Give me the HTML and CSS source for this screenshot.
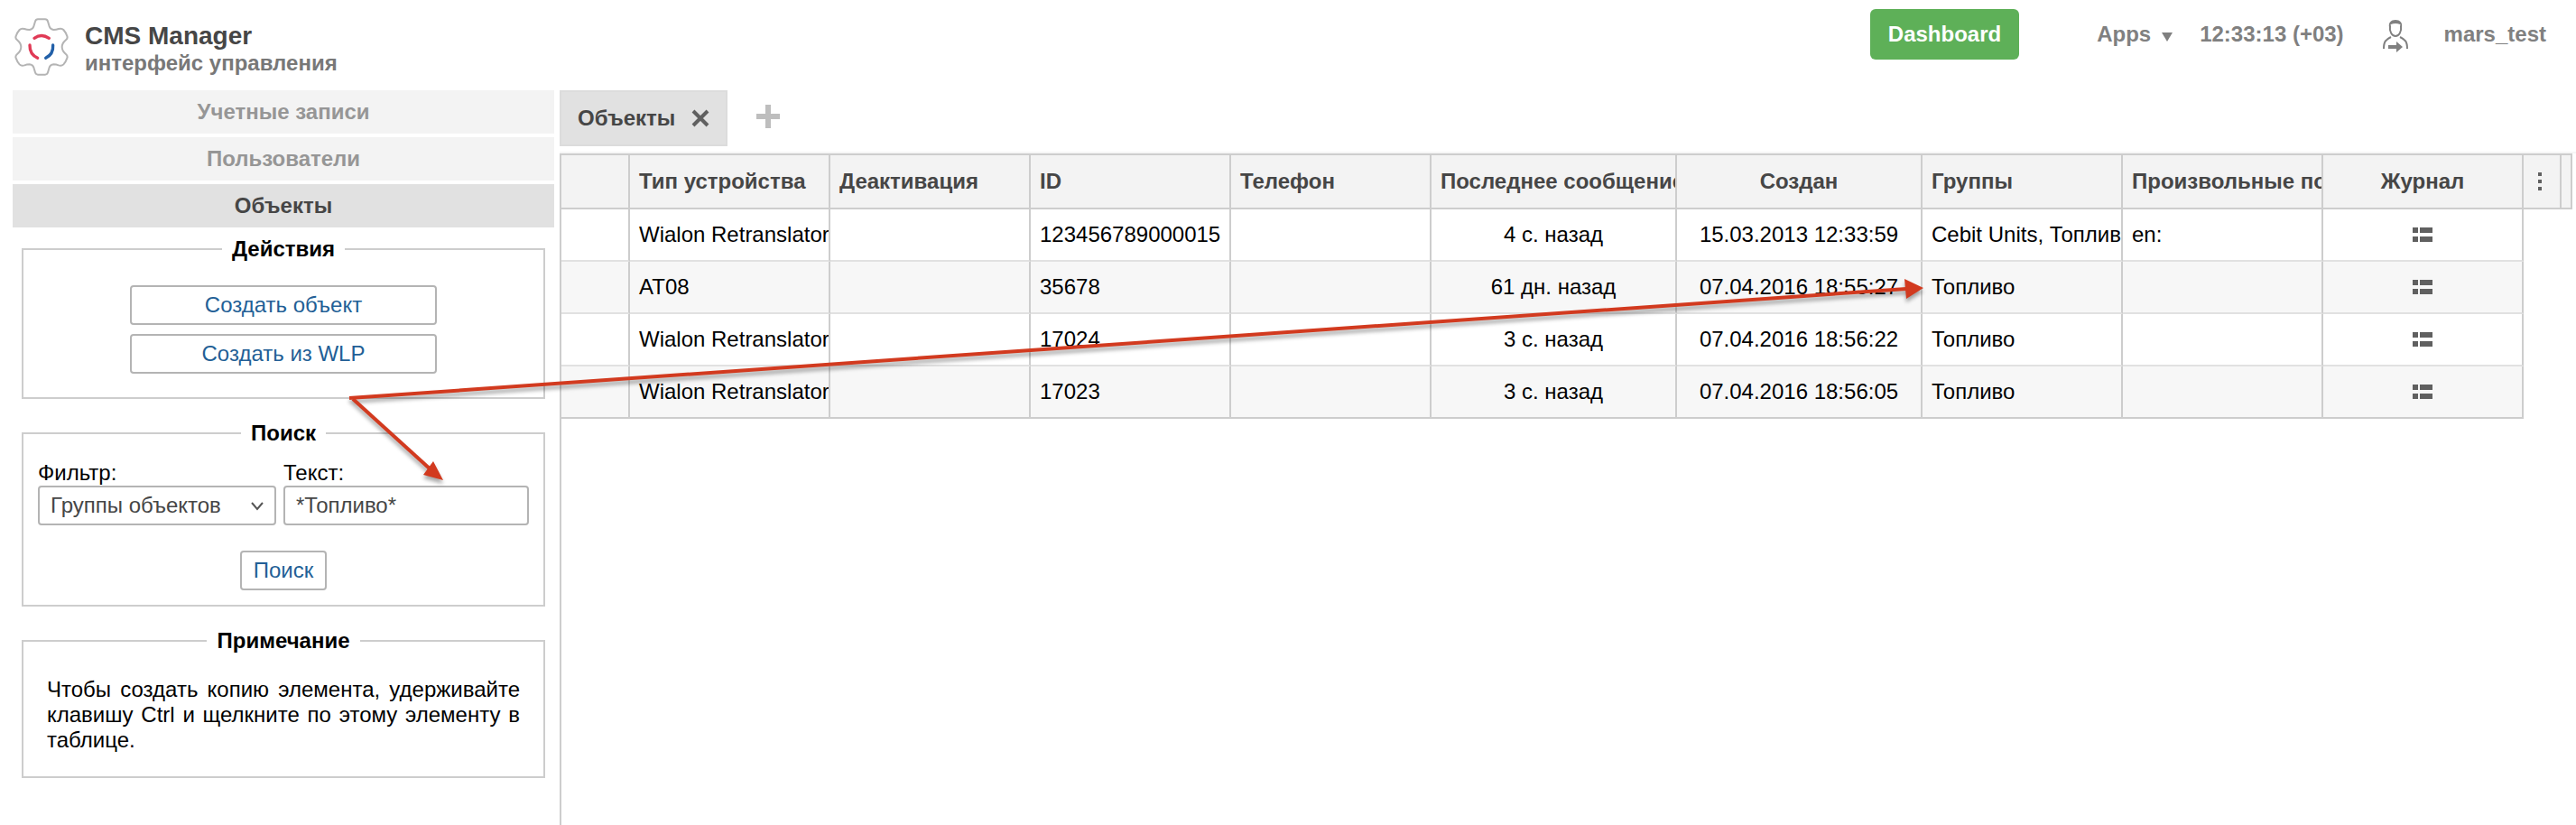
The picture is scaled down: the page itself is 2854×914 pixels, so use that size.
FILE: index.html
```html
<!DOCTYPE html>
<html lang="ru">
<head>
    <meta charset="UTF-8">
    <meta name="viewport" content="width=device-width, initial-scale=1.0">
    <title>CMS Manager</title>
    <link rel="stylesheet" href="styles.css">
</head>
<body>
    <header class="header">
        <svg class="logo" viewBox="48 59 180 192" fill="none" stroke-linecap="round">
            <path stroke="#b4b4b4" stroke-width="6" stroke-linejoin="round" d="M126 63H150Q157 63 159 70L164 87Q167 97 178 98Q187 98 195 95Q205 92 211 98Q219 107 223 119Q226 126 219 132Q206 143 206 155Q206 168 219 179Q226 185 223 192Q219 204 211 213Q205 219 195 216Q187 213 178 213Q167 214 164 223L159 240Q157 247 150 247H126Q119 247 117 240L112 223Q109 214 98 213Q89 213 81 216Q71 219 65 213Q57 204 53 192Q50 185 57 179Q70 168 70 155Q70 143 57 132Q50 126 53 119Q57 107 65 98Q71 92 81 95Q89 98 98 98Q109 97 112 87L117 70Q119 63 126 63Z"/>
            <path stroke="#e03a56" stroke-width="10" d="M114 126Q138 109 163 126M99 149Q98 179 125 192"/>
            <path stroke="#2260a8" stroke-width="10" d="M176 149Q178 179 152 192"/>
        </svg>
        <div class="brand">
            <h1>CMS Manager</h1>
            <p>интерфейс управления</p>
        </div>
        <button class="dashboard" type="button">Dashboard</button>
        <button class="apps" type="button">Apps
            <svg width="12" height="10" viewBox="0 0 12 10"><path fill="#808080" d="M0 0h12L6 10z"/></svg>
        </button>
        <span class="clock">12:33:13 (+03)</span>
        <svg class="user-icon" width="28" height="36" viewBox="0 0 28 36">
            <path fill="none" stroke="#808080" stroke-width="2" d="M8 6C7 13 10 18 14 18s7-5 6-12M1 32C1 24 3 22 9 19M27 32c0-8-2-10-8-13"/>
            <path fill="#808080" d="M7 8C6 3 9 0 14 0s8 3 7 8l-2-3Q14 3 9 5zM6 28h9v-4l7 6-7 6v-4H6z"/>
        </svg>
        <a class="user" href="#">mars_test</a>
    </header>

    <div class="layout">
        <aside class="sidebar">
            <nav class="menu">
                <a href="#">Учетные записи</a>
                <a href="#">Пользователи</a>
                <a href="#" class="active">Объекты</a>
            </nav>

            <fieldset class="panel actions">
                <legend>Действия</legend>
                <button class="btn" type="button">Создать объект</button>
                <button class="btn" type="button">Создать из WLP</button>
            </fieldset>

            <fieldset class="panel search">
                <legend>Поиск</legend>
                <div class="search-fields">
                    <div class="field">
                        <label for="filter">Фильтр:</label>
                        <div class="select-box">
                            <select id="filter">
                                <option>Группы объектов</option>
                            </select>
                            <svg width="14" height="10" viewBox="0 0 14 10"><path fill="none" stroke="#555" stroke-width="2" d="M1 1l6 7 6-7"/></svg>
                        </div>
                    </div>
                    <div class="field">
                        <label for="text">Текст:</label>
                        <input type="text" id="text" value="*Топливо*">
                    </div>
                </div>
                <button class="btn" type="button">Поиск</button>
            </fieldset>

            <fieldset class="panel note">
                <legend>Примечание</legend>
                <p>Чтобы создать копию элемента, удерживайте клавишу Ctrl и щелкните по этому элементу в таблице.</p>
            </fieldset>
        </aside>

        <main class="content">
            <div class="tabs">
                <div class="tab">
                    <span>Объекты</span>
                    <button type="button" aria-label="Закрыть">
                        <svg width="20" height="20" viewBox="0 0 20 20"><path stroke="#606060" stroke-width="4" d="M2 2l16 16M18 2L2 18"/></svg>
                    </button>
                </div>
                <button class="add-tab" type="button" aria-label="Добавить">
                    <svg width="26" height="26" viewBox="0 0 26 26"><path stroke="#bebebe" stroke-width="6" d="M13 0v26M0 13h26"/></svg>
                </button>
            </div>
            <div class="grid">
                <table>
                    <colgroup>
                        <col class="col-check">
                        <col class="col">
                        <col class="col">
                        <col class="col">
                        <col class="col">
                        <col class="col-wide">
                        <col class="col-wide">
                        <col class="col">
                        <col class="col">
                        <col class="col">
                        <col class="col-menu">
                        <col class="col-scroll">
                    </colgroup>
                    <thead>
                        <tr>
                            <th></th>
                            <th>Тип устройства</th>
                            <th>Деактивация</th>
                            <th>ID</th>
                            <th>Телефон</th>
                            <th>Последнее сообщение</th>
                            <th class="center">Создан</th>
                            <th>Группы</th>
                            <th>Произвольные поля</th>
                            <th class="center">Журнал</th>
                            <th class="menu-cell">
                                <button type="button" aria-label="Столбцы">
                                    <svg width="4" height="20" viewBox="0 0 4 20"><path fill="#606060" d="M0 0h4v4H0zM0 8h4v4H0zM0 16h4v4H0z"/></svg>
                                </button>
                            </th>
                            <th class="scroll-cell"></th>
                        </tr>
                    </thead>
                    <tbody>
                        <tr>
                            <td></td>
                            <td>Wialon Retranslator</td>
                            <td></td>
                            <td>123456789000015</td>
                            <td></td>
                            <td class="center">4 с. назад</td>
                            <td class="center">15.03.2013 12:33:59</td>
                            <td>Cebit Units, Топливо</td>
                            <td>en:</td>
                            <td class="center"><button type="button" aria-label="Журнал"><svg width="22" height="16" viewBox="0 0 22 16"><path fill="#606060" d="M0 0h6v6H0zM8 0h14v6H8zM0 10h6v6H0zM8 10h14v6H8z"/></svg></button></td>
                        </tr>
                        <tr>
                            <td></td>
                            <td>AT08</td>
                            <td></td>
                            <td>35678</td>
                            <td></td>
                            <td class="center">61 дн. назад</td>
                            <td class="center">07.04.2016 18:55:27</td>
                            <td>Топливо</td>
                            <td></td>
                            <td class="center"><button type="button" aria-label="Журнал"><svg width="22" height="16" viewBox="0 0 22 16"><path fill="#606060" d="M0 0h6v6H0zM8 0h14v6H8zM0 10h6v6H0zM8 10h14v6H8z"/></svg></button></td>
                        </tr>
                        <tr>
                            <td></td>
                            <td>Wialon Retranslator</td>
                            <td></td>
                            <td>17024</td>
                            <td></td>
                            <td class="center">3 с. назад</td>
                            <td class="center">07.04.2016 18:56:22</td>
                            <td>Топливо</td>
                            <td></td>
                            <td class="center"><button type="button" aria-label="Журнал"><svg width="22" height="16" viewBox="0 0 22 16"><path fill="#606060" d="M0 0h6v6H0zM8 0h14v6H8zM0 10h6v6H0zM8 10h14v6H8z"/></svg></button></td>
                        </tr>
                        <tr>
                            <td></td>
                            <td>Wialon Retranslator</td>
                            <td></td>
                            <td>17023</td>
                            <td></td>
                            <td class="center">3 с. назад</td>
                            <td class="center">07.04.2016 18:56:05</td>
                            <td>Топливо</td>
                            <td></td>
                            <td class="center"><button type="button" aria-label="Журнал"><svg width="22" height="16" viewBox="0 0 22 16"><path fill="#606060" d="M0 0h6v6H0zM8 0h14v6H8zM0 10h6v6H0zM8 10h14v6H8z"/></svg></button></td>
                        </tr>
                    </tbody>
                </table>
            </div>
        </main>
    </div>

    <!-- arrows from the search text to the matching group -->
    <svg class="arrows" width="2140" height="550" viewBox="0 0 2140 550">
        <g stroke="#d23a1f" stroke-width="4" fill="none">
            <path d="M391 442L478 521"/>
            <path d="M387 441L2112 320"/>
        </g>
        <path fill="#d23a1f" d="M2131 319L2110 309L2112 331zM491 532L480 511L469 526z"/>
    </svg>
</body>
</html>
```
FILE: styles.css
```css
* {
    box-sizing: border-box;
}
body {
    margin: 0;
    min-height: 100vh;
    display: flex;
    flex-direction: column;
    position: relative;
    font-family: "Liberation Sans", Arial, sans-serif;
    font-size: 24px;
    line-height: 28px;
    color: #000;
    background-color: #fff;
}
button, input, select {
    font: inherit;
}
button {
    padding: 0;
    border: none;
    background: none;
    cursor: pointer;
}
a {
    text-decoration: none;
}
svg {
    display: block;
}

/* header */
.header {
    display: flex;
    align-items: flex-start;
    height: 100px;
    padding: 10px 33px 0 16px;
    font-weight: bold;
    color: #808080;
}
.logo {
    width: 60px;
    height: 64px;
    margin-top: 10px;
}
.brand {
    margin: 14px auto 0 18px;
}
.brand h1 {
    margin: 0;
    font-size: 28px;
    line-height: 32px;
    color: #464646;
}
.brand p {
    margin: 0;
    color: #787878;
}
.dashboard {
    height: 56px;
    padding: 0 20px;
    border-radius: 6px;
    font-weight: bold;
    color: #fff;
    background-color: #5eb058;
}
.apps {
    display: flex;
    align-items: center;
    gap: 12px;
    margin: 14px 30px 0 86px;
    font-weight: bold;
    color: #808080;
}
.apps svg {
    margin-top: 6px;
}
.clock {
    margin-top: 14px;
}
.user-icon {
    margin: 12px 40px 0 43px;
}
.user {
    margin-top: 14px;
    color: #808080;
}

/* sidebar */
.layout {
    display: flex;
    flex: 1;
}
.sidebar {
    flex: none;
    width: 620px;
}
.menu {
    display: flex;
    flex-direction: column;
    gap: 4px;
    padding: 0 6px 0 14px;
}
.menu a {
    line-height: 48px;
    text-align: center;
    font-weight: bold;
    color: #969696;
    background-color: #f3f3f3;
}
.menu a.active {
    color: #464646;
    background-color: #e1e1e1;
}
.panel {
    margin: 10px 16px 0 24px;
    border: 2px solid #cdcdcd;
}
.panel legend {
    padding: 0 11px;
    margin: 0 auto;
    font-weight: bold;
}
.btn {
    height: 44px;
    border: 2px solid #b4b4b4;
    border-radius: 4px;
    color: #235f96;
    background-color: #fff;
}
.actions {
    padding: 26px 16px 16px;
}
.actions .btn {
    display: block;
    width: 340px;
    margin: 0 auto 10px;
}
.search {
    margin-top: 24px;
    padding: 16px;
}
.search .btn {
    display: block;
    width: 96px;
    margin: 28px auto 0;
}
.search-fields {
    display: grid;
    grid-template-columns: 33fr 34fr;
    gap: 8px;
}
.field label {
    display: block;
}
.field input, .field select {
    display: block;
    width: 100%;
    height: 44px;
    padding: 0 12px;
    border: 2px solid #b4b4b4;
    border-radius: 4px;
    color: #464646;
    background-color: #fff;
}
.select-box {
    position: relative;
}
.field select {
    appearance: none;
}
.select-box svg {
    position: absolute;
    right: 14px;
    top: 18px;
    pointer-events: none;
}
.note {
    margin-top: 24px;
    padding: 26px;
}
.note p {
    margin: 0;
    text-align: justify;
}

/* content */
.content {
    flex: 1;
    min-width: 0;
    display: flex;
    flex-direction: column;
}
.tabs {
    display: flex;
    align-items: flex-start;
    gap: 32px;
    height: 70px;
    border-bottom: 2px solid #f6f6f6;
}
.tab {
    display: flex;
    align-items: center;
    gap: 18px;
    height: 62px;
    padding: 0 18px;
    border: 2px solid #dcdcdc;
    font-weight: bold;
    color: #464646;
    background-color: #e1e1e1;
}
.add-tab {
    margin-top: 16px;
}
.grid {
    flex: 1;
    overflow-x: auto;
    padding-right: 4px;
    border-left: 2px solid #cdcdcd;
}
table {
    width: 100%;
    table-layout: fixed;
    border-collapse: separate;
    border-spacing: 0;
}
.col-check {
    width: 76px;
}
.col {
    width: 222px;
}
.col-wide {
    width: 272px;
}
.col-menu {
    width: 42px;
}
.col-scroll {
    width: 12px;
}
th, td {
    padding: 0 0 0 10px;
    border-right: 2px solid #cdcdcd;
    text-align: left;
    white-space: nowrap;
    overflow: hidden;
}
th {
    height: 62px;
    border-top: 2px solid #cdcdcd;
    border-bottom: 2px solid #cdcdcd;
    color: #464646;
    background-color: #f3f3f3;
}
td {
    height: 58px;
    border-bottom: 2px solid #e1e1e1;
}
tbody tr:nth-child(even) td {
    background-color: #f7f7f7;
}
tbody tr:last-child td {
    border-bottom-color: #cdcdcd;
}
.center {
    padding: 0;
    text-align: center;
}
.center button, .menu-cell button {
    display: block;
    margin: 0 auto;
}
.menu-cell {
    padding: 0 4px 0 0;
}
.scroll-cell {
    padding: 0;
}

.arrows {
    position: absolute;
    left: 0;
    top: 0;
    pointer-events: none;
    filter: drop-shadow(0 4px 2px rgba(0, 0, 0, 0.35));
}
```
